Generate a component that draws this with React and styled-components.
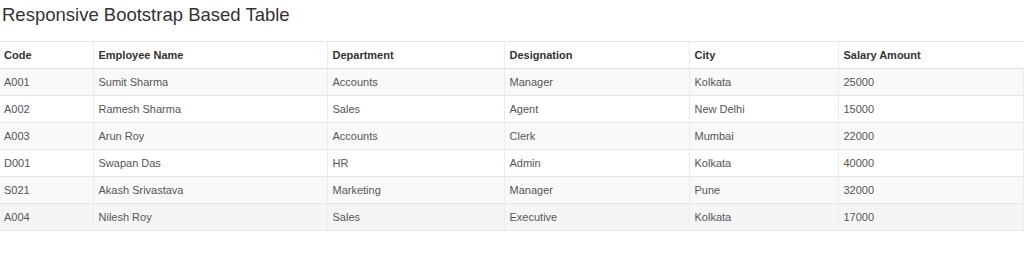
import React from "react";
import styled, { createGlobalStyle } from "styled-components";

const employees = [
  { code: "A001", name: "Sumit Sharma", dept: "Accounts", desig: "Manager", city: "Kolkata", salary: "25000" },
  { code: "A002", name: "Ramesh Sharma", dept: "Sales", desig: "Agent", city: "New Delhi", salary: "15000" },
  { code: "A003", name: "Arun Roy", dept: "Accounts", desig: "Clerk", city: "Mumbai", salary: "22000" },
  { code: "D001", name: "Swapan Das", dept: "HR", desig: "Admin", city: "Kolkata", salary: "40000" },
  { code: "S021", name: "Akash Srivastava", dept: "Marketing", desig: "Manager", city: "Pune", salary: "32000" },
  { code: "A004", name: "Nilesh Roy", dept: "Sales", desig: "Executive", city: "Kolkata", salary: "17000" },
];

const widths = [93, 234, 177, 185, 149, 186];

export default function App() {
  return (
    <>
      <GlobalStyle />
      <Page>
        <Title>Responsive Bootstrap Based Table</Title>
        <Table>
          <colgroup>
            {widths.map((w, i) => (
              <col key={i} style={{ width: w }} />
            ))}
          </colgroup>
          <thead>
            <tr>
              <Th>Code</Th>
              <Th>Employee Name</Th>
              <Th>Department</Th>
              <Th>Designation</Th>
              <Th>City</Th>
              <Th>Salary Amount</Th>
            </tr>
          </thead>
          <tbody>
            {employees.map((e, i) => (
              <Row key={e.code} $shade={i === 5 ? "#f5f5f5" : i % 2 === 0 ? "#f9f9f9" : "#fff"}>
                <Td>{e.code}</Td>
                <Td>{e.name}</Td>
                <Td>{e.dept}</Td>
                <Td>{e.desig}</Td>
                <Td>{e.city}</Td>
                <Td>{e.salary}</Td>
              </Row>
            ))}
          </tbody>
        </Table>
      </Page>
    </>
  );
}

const GlobalStyle = createGlobalStyle`
  body {
    margin: 0;
    background: #fff;
    font-family: "Liberation Sans", Arial, sans-serif;
  }
`;

const Page = styled.div`
  padding-top: 5px;
`;

const Title = styled.h1`
  margin: 0 0 16px 2px;
  font-size: 18.5px;
  line-height: 20px;
  font-weight: normal;
  color: #333;
`;

const Table = styled.table`
  width: 100%;
  border-collapse: collapse;
  table-layout: fixed;
  border-bottom: 1px solid #e6e6e6;
`;

const Th = styled.th`
  text-align: left;
  font-size: 11px;
  line-height: 15px;
  font-weight: bold;
  color: #333;
  padding: 6px 5px 5px;
  border-top: 1px solid #e8e8e8;
  border-bottom: 1px solid #e0e0e0;
  border-left: 1px solid #ececec;
  &:first-child {
    border-left: 0;
    padding-left: 4px;
  }
`;

const Row = styled.tr`
  background: ${(p) => p.$shade};
`;

const Td = styled.td`
  font-size: 11px;
  line-height: 15px;
  color: #555;
  padding: 6px 5px 5px;
  border-top: 1px solid #e6e6e6;
  border-left: 1px solid #ececec;
  &:first-child {
    border-left: 0;
    padding-left: 4px;
  }
  &:last-child {
    box-shadow: inset -7px 0 0 -6px #ececec;
  }
`;
